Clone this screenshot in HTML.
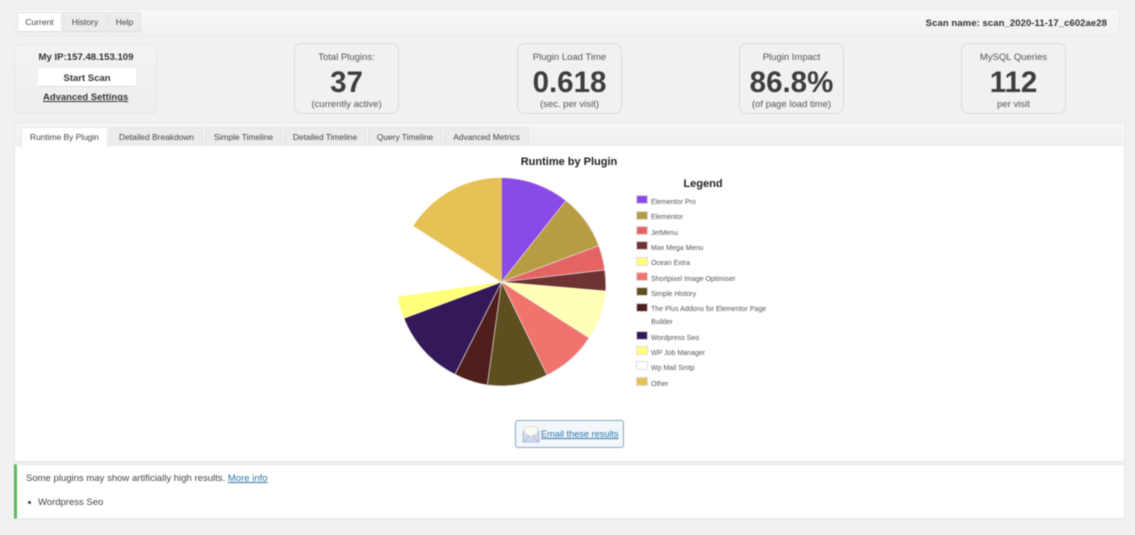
<!DOCTYPE html>
<html><head><meta charset="utf-8">
<style>
html,body{margin:0;padding:0;background:#f1f1f1}
body{width:1135px;height:535px;overflow:hidden;position:relative;font-family:"Liberation Sans",Arial,sans-serif;color:#444}
#w{position:absolute;left:0;top:0;width:1135px;height:535px;filter:blur(.5px)}
#w div,#w a,#w svg{position:absolute;box-sizing:border-box}
.t{white-space:nowrap;text-align:center}
.nav{background:linear-gradient(#f8f8f8,#f1f1f1);border:1px solid #e9e9e9;border-radius:5px}
.btn{top:12px;height:20px;font-size:8.5px;line-height:18px;text-align:center;background:#ececec;border:1px solid #e2e2e2;border-bottom-color:#dcdcdc;color:#444}
.box{top:43px;width:105px;height:71px;border:1px solid #d9d9d9;border-radius:8px;background:#f1f1f1;text-align:center}
.box .a{left:0;right:0;top:7px;font-size:9.5px;line-height:13px;color:#555}
.box .b{left:0;right:0;top:20.5px;font-size:29.5px;font-weight:bold;line-height:35px;color:#3e3e3e}
.box .c{left:0;right:0;top:54px;font-size:9.5px;line-height:14px;color:#555}
.tab{top:127px;height:19px;font-size:8.4px;line-height:19px;text-align:center;background:#ececec;border:1px solid #e4e4e4;border-bottom:0;color:#444;white-space:nowrap}
.sw{left:636px;width:12px;height:9px;border:1px solid #e4dcdc}
.lg{left:651px;font-size:7px;line-height:10px;color:#555;white-space:nowrap;margin-top:1.5px}
</style></head><body><div id="w">

<div class="nav" style="left:14px;top:9px;width:1106px;height:27px"></div>
<div class="btn" style="left:17px;width:45px;background:#fff">Current</div>
<div class="btn" style="left:63px;width:44px">History</div>
<div class="btn" style="left:108px;width:33px">Help</div>
<div class="t" style="right:28px;top:18px;font-size:9.5px;font-weight:bold;line-height:12px;color:#333;letter-spacing:.08px">Scan name: scan_2020-11-17_c602ae28</div>

<div style="left:14px;top:44px;width:143px;height:70px;border:1px solid #e6e6e6;border-radius:6px;background:linear-gradient(#f3f3f3,#eeeeee)"></div>
<div class="t" style="left:14px;width:144px;top:52px;font-size:9.6px;font-weight:bold;line-height:12px;color:#333">My IP:157.48.153.109</div>
<div class="t" style="left:38px;top:68px;width:98px;height:19px;background:#fff;border-bottom:1px solid #ddd;font-size:9.5px;font-weight:bold;line-height:21px;color:#333">Start Scan</div>
<a class="t" style="left:43px;top:90px;font-size:9.4px;font-weight:bold;line-height:13px;color:#333;text-decoration:underline;letter-spacing:.05px">Advanced Settings</a>

<div class="box" style="left:294px"><div class="a">Total Plugins:</div><div class="b">37</div><div class="c">(currently active)</div></div>
<div class="box" style="left:517px"><div class="a">Plugin Load Time</div><div class="b">0.618</div><div class="c">(sec. per visit)</div></div>
<div class="box" style="left:739px"><div class="a">Plugin Impact</div><div class="b">86.8%</div><div class="c">(of page load time)</div></div>
<div class="box" style="left:961px"><div class="a">MySQL Queries</div><div class="b">112</div><div class="c">per visit</div></div>

<div style="left:14px;top:122px;width:1111px;height:340px;background:#fff;border:1px solid #e8e8e8"></div>
<div style="left:15px;top:123px;width:1108px;height:23px;background:linear-gradient(#f6f6f6,#efefef)"></div>
<div class="tab" style="left:21px;width:87px;background:#fff;height:20px">Runtime By Plugin</div>
<div class="tab" style="left:110px;width:93px">Detailed Breakdown</div>
<div class="tab" style="left:205px;width:77px">Simple Timeline</div>
<div class="tab" style="left:284px;width:82px">Detailed Timeline</div>
<div class="tab" style="left:368px;width:74px">Query Timeline</div>
<div class="tab" style="left:444px;width:85px">Advanced Metrics</div>

<div class="t" style="left:469px;width:200px;top:156px;font-size:11px;font-weight:bold;line-height:13px;color:#222">Runtime by Plugin</div>

<svg style="left:0;top:0" width="1135" height="535" viewBox="0 0 1135 535">
<g stroke="#e8dfdc" stroke-width=".7">
<path fill="#8a4ae6" d="M501.5 282L501.5 177.7A104 104 0 0 1 566 200.7Z"/>
<path fill="#b79c42" d="M501.5 282L566 200.7A104 104 0 0 1 598.7 245.7Z"/>
<path fill="#e46464" d="M501.5 282L598.7 245.7A104 104 0 0 1 604.7 270Z"/>
<path fill="#6f3232" d="M501.5 282L604.7 270A104 104 0 0 1 605.7 291Z"/>
<path fill="#ffffb5" stroke="none" d="M501.5 282L605.7 291A104 104 0 0 1 589 338Z"/>
<path fill="#f0736e" d="M501.5 282L589 338A104 104 0 0 1 547 375Z"/>
<path fill="#5e4e20" d="M501.5 282L547 375A104 104 0 0 1 487.3 385Z"/>
<path fill="#4f1f1c" d="M501.5 282L487.3 385A104 104 0 0 1 455 374.3Z"/>
<path fill="#33195a" d="M501.5 282L455 374.3A104 104 0 0 1 404 318.3Z"/>
<path fill="#ffff7a" stroke="none" d="M501.5 282L404 318.3A104 104 0 0 1 398 296.7Z"/>
<path fill="#e6c155" stroke="none" d="M501.5 282L413.3 226A104 104 0 0 1 501.5 177.7Z"/>
</g>
</svg>

<div class="t" style="left:664px;width:78px;top:178px;font-size:11px;font-weight:bold;line-height:13px;color:#222">Legend</div>
<div class="sw" style="top:195px;background:#8a4ae6"></div><div class="lg" style="top:196px">Elementor Pro</div>
<div class="sw" style="top:211px;background:#b79c42"></div><div class="lg" style="top:211px">Elementor</div>
<div class="sw" style="top:226px;background:#e46464"></div><div class="lg" style="top:227px">JetMenu</div>
<div class="sw" style="top:241px;background:#6f3232"></div><div class="lg" style="top:242px">Max Mega Menu</div>
<div class="sw" style="top:257px;background:#ffff7a"></div><div class="lg" style="top:257px">Ocean Extra</div>
<div class="sw" style="top:272px;background:#f0736e"></div><div class="lg" style="top:273px">Shortpixel Image Optimiser</div>
<div class="sw" style="top:287px;background:#5e4e20"></div><div class="lg" style="top:288px">Simple History</div>
<div class="sw" style="top:303px;background:#4f1f1c"></div><div class="lg" style="top:303px">The Plus Addons for Elementor Page</div>
<div class="lg" style="top:316px">Builder</div>
<div class="sw" style="top:331px;background:#33195a"></div><div class="lg" style="top:332px">Wordpress Seo</div>
<div class="sw" style="top:346px;background:#ffff7a"></div><div class="lg" style="top:347px">WP Job Manager</div>
<div class="sw" style="top:361px;background:#fff;border-color:#ddd"></div><div class="lg" style="top:362px">Wp Mail Smtp</div>
<div class="sw" style="top:377px;background:#e6c155"></div><div class="lg" style="top:378px">Other</div>

<div style="left:515px;top:420px;width:109px;height:28px;background:#f3f6fa;border:1px solid #86aac4;border-radius:3px"></div>
<svg style="left:522px;top:425px" width="18" height="18" viewBox="0 0 18 18">
<path d="M1 6.5L1 17L17 17L17 6.5Z" fill="#cfd8ee" stroke="#a3b1d2" stroke-width=".8"/>
<path d="M2.5 8V2.5Q9 .5 15.5 2.5V8L9 12Z" fill="#fbfaf2" stroke="#cfcfbe" stroke-width=".6"/>
<path d="M1 17L8 10.5M17 17L10 10.5" stroke="#a3b1d2" stroke-width=".6" fill="none"/>
</svg>
<a class="t" style="left:541px;top:428px;font-size:9.2px;line-height:13px;color:#2a76a8;text-decoration:underline">Email these results</a>

<div style="left:14px;top:464px;width:1111px;height:55px;background:#fff;border:1px solid #e5e5e5;border-left:3px solid #5cb85c"></div>
<div class="t" style="left:26px;top:472px;font-size:9.5px;line-height:14px;color:#444;word-spacing:.1px">Some plugins may show artificially high results. <span style="color:#2a76a8;text-decoration:underline">More info</span></div>
<div style="left:28px;top:501px;width:3px;height:3px;border-radius:50%;background:#444"></div>
<div class="t" style="left:38px;top:496px;font-size:9.5px;line-height:14px;color:#444">Wordpress Seo</div>

</div></body></html>
